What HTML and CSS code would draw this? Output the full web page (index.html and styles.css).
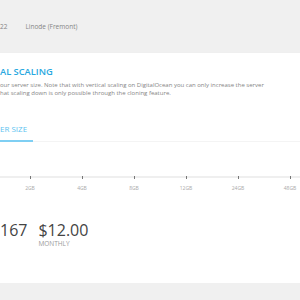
FILE: index.html
```
<!DOCTYPE html>
<html lang="en">
<head>
    <meta charset="UTF-8">
    <meta name="viewport" content="width=device-width, initial-scale=1.0">
    <title>Server Scaling</title>
    <link rel="stylesheet" href="styles.css">
</head>
<body>
    <!-- Baris info server -->
    <div class="info-bar">
        <span class="info-ip">22</span>
        <span class="info-host">Linode (Fremont)</span>
    </div>

    <div class="card">
        <h2 class="title">AL SCALING</h2>
        <p class="desc">
            <span>our server size. Note that with vertical scaling on DigitalOcean you can only increase the server</span>
            <span>hat scaling down is only possible through the cloning feature.</span>
        </p>

        <div class="tabs">
            <div class="tab active">ER SIZE</div>
        </div>

        <!-- Slider ukuran -->
        <div class="slider">
            <div class="track"></div>
            <div class="ticks">
                <div class="tick"><i></i><span>2GB</span></div>
                <div class="tick"><i></i><span>4GB</span></div>
                <div class="tick"><i></i><span>8GB</span></div>
                <div class="tick"><i></i><span>12GB</span></div>
                <div class="tick"><i></i><span>24GB</span></div>
                <div class="tick"><i></i><span>48GB</span></div>
            </div>
        </div>

        <div class="prices">
            <div class="price">
                <div class="amount">167</div>
            </div>
            <div class="price">
                <div class="amount">$12.00</div>
                <div class="period">MONTHLY</div>
            </div>
        </div>
    </div>
</body>
</html>
```

FILE: styles.css
```
body {
    font-family: "Open Sans", Arial, sans-serif;
    background-color: #f0f0f0;
    margin: 0;
    padding: 0;
    overflow: hidden;
}
.info-bar {
    height: 53px;
    display: flex;
    align-items: center;
    gap: 18px;
    font-size: 6.5px;
    color: #858585;
    padding-bottom: 1px;
    box-sizing: border-box;
}
.card {
    background-color: #fff;
    height: 230px;
    box-shadow: 0 2px 3px rgba(0, 0, 0, 0.12);
    padding-top: 13px;
    box-sizing: border-box;
}
.title {
    margin: 0;
    font-size: 9.3px;
    line-height: 12px;
    font-weight: 600;
    color: #29a8e0;
}
.desc {
    margin: 3px 0 0;
    font-size: 6px;
    line-height: 8px;
    color: #858585;
}
.desc span {
    display: block;
    white-space: nowrap;
}
.tabs {
    margin-top: 18px;
    border-bottom: 1px solid #f4f4f4;
}
.tab {
    display: inline-block;
    padding: 0 6px 6px 0;
    font-size: 8px;
    line-height: 10px;
    color: #5cc3f0;
    border-bottom: 2px solid #7fcff3;
    margin-bottom: -1px;
}
.slider {
    margin-top: 34px;
    overflow: hidden;
}
.track {
    height: 2px;
    background-color: #efefef;
}
.ticks {
    display: flex;
    margin-left: 4px;
    margin-top: -2px;
}
.tick {
    width: 52px;
    flex-shrink: 0;
    display: flex;
    flex-direction: column;
    align-items: center;
}
.tick i {
    width: 1px;
    height: 3px;
    background-color: #777;
}
.tick span {
    margin-top: 6px;
    font-size: 5px;
    line-height: 6px;
    color: #aaa;
}
.prices {
    display: flex;
    gap: 11px;
    margin-top: 31px;
}
.amount {
    font-size: 16px;
    line-height: 17px;
    color: #444;
}
.period {
    margin-top: 1px;
    font-size: 6.5px;
    line-height: 8px;
    color: #9a9a9a;
}
```
